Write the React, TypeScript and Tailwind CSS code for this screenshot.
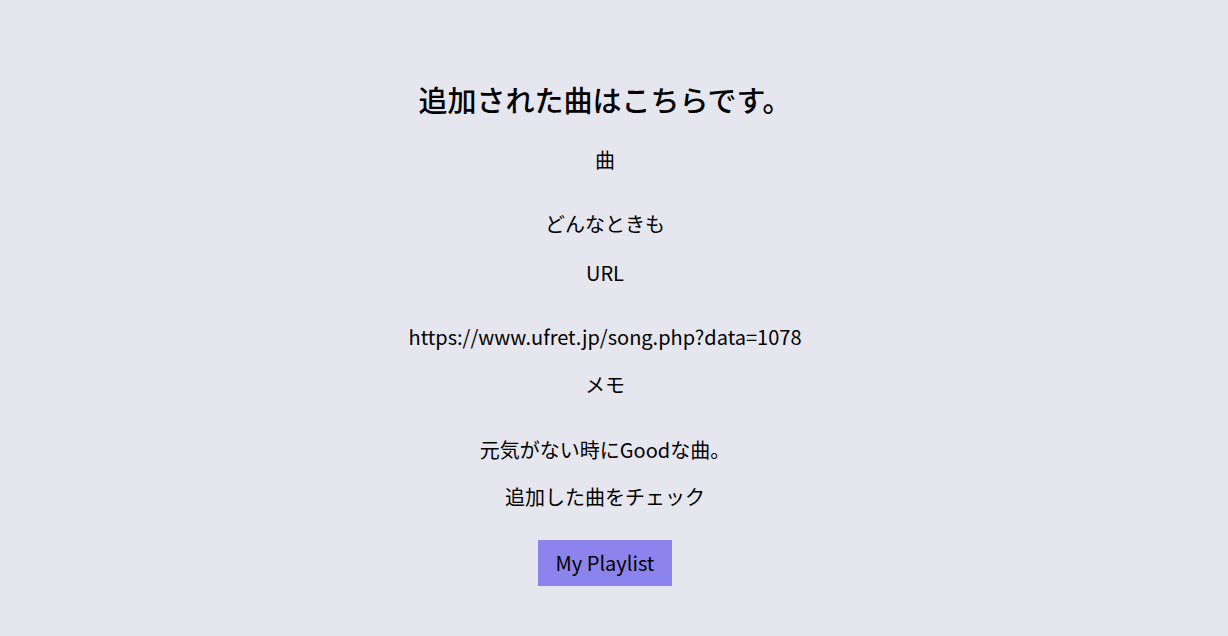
const font = { fontFamily: '"Noto Sans CJK JP", "Noto Sans", sans-serif' };

export default function App() {
  return (
    <div className="min-h-[636px] w-full bg-[#e6e6ef] text-black" style={font}>
      <div className="flex flex-col items-center pt-[79px] pr-[18px]">
        <h1 className="text-[29px] leading-[40px] font-medium">追加された曲はこちらです。</h1>
        <p className="mt-[29px] text-[20px] leading-[24px]">曲</p>
        <p className="mt-[40px] text-[20px] leading-[24px]">どんなときも</p>
        <p className="mt-[25px] text-[20px] leading-[24px]">URL</p>
        <p className="mt-[40px] text-[20px] leading-[24px]">https://www.ufret.jp/song.php?data=1078</p>
        <p className="mt-[24px] text-[20px] leading-[24px]">メモ</p>
        <p className="mt-[41px] text-[20px] leading-[24px]">元気がない時にGoodな曲。</p>
        <p className="mt-[23px] text-[20px] leading-[24px]">追加した曲をチェック</p>
        <button className="mt-[31px] h-[46px] w-[134px] bg-[#8c84ec] text-[20px]">My Playlist</button>
      </div>
    </div>
  );
}
